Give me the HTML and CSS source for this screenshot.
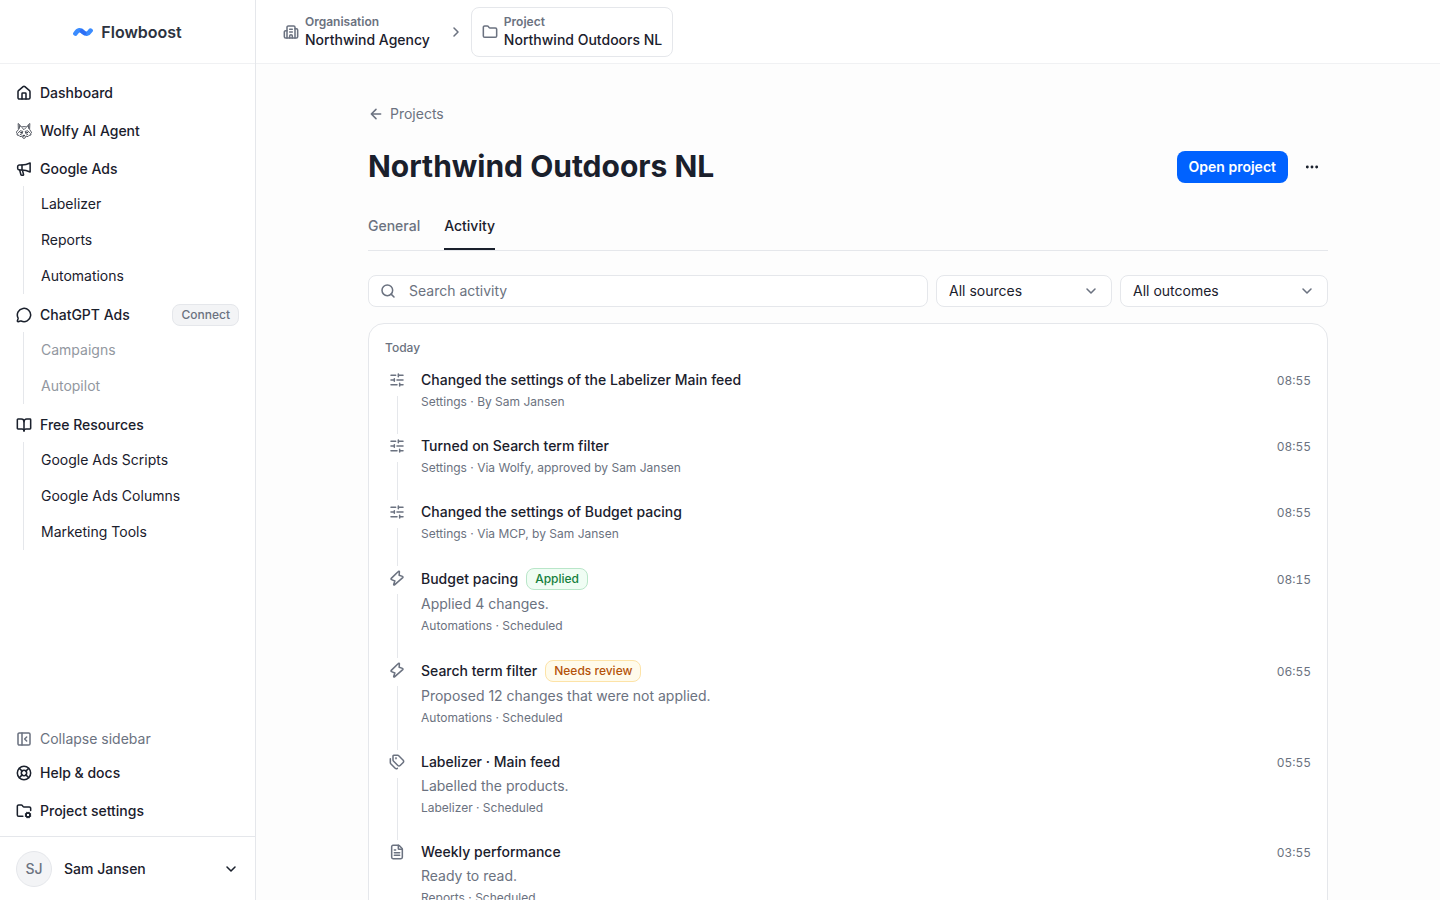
FILE: index.html
```html
<!DOCTYPE html>
<html lang="en">
<head>
<meta charset="utf-8">
<title>Northwind Outdoors NL – Activity</title>
<link rel="stylesheet" href="styles.css">
</head>
<body>
<svg class="sprite" aria-hidden="true">
  <symbol id="i-sliders" viewBox="0 0 24 24"><path d="M10 5H3M12 19H3M14 3v4M16 17v4M21 12h-9M21 19h-5M21 5h-7M8 10v4M8 12H3"/></symbol>
  <symbol id="i-zap" viewBox="0 0 24 24"><path d="M14 2.200 3.400 12.600a1.100 1.100 0 0 0 .4 1.800L8.800 16.400 7 21.600a.8.8 0 0 0 1.300.8L20.600 11.400a1.100 1.100 0 0 0-.4-1.800L15.200 7.800 15.600 2.900a.9.9 0 0 0-1.600-.7z"/></symbol>
  <symbol id="i-down" viewBox="0 0 24 24"><path d="m6 9 6 6 6-6"/></symbol>
</svg>
<div class="app">
  <aside class="sidebar">
    <div class="brand">
      <svg class="brand-mark" viewBox="0 0 20 10" aria-hidden="true">
        <path d="M2.400 6.600C5 2.400 7.600 2.500 10 5S15 7.600 17.600 3.600" fill="none" stroke="#3b8cff" stroke-width="4.600" stroke-linecap="round"/>
        <path d="M8.600 4C9.600 4.900 10.500 5.700 11.600 6.200" fill="none" stroke="#2f6ff5" stroke-width="4" stroke-linecap="round"/>
      </svg>
      <span>Flowboost</span>
    </div>
    <nav class="nav">
      <a class="nav-item" href="#"><svg class="icon" viewBox="0 0 24 24"><path d="M15 21v-8a1 1 0 0 0-1-1h-4a1 1 0 0 0-1 1v8"/><path d="M3 10a2 2 0 0 1 .709-1.528l7-6a2 2 0 0 1 2.582 0l7 6A2 2 0 0 1 21 10v9a2 2 0 0 1-2 2H5a2 2 0 0 1-2-2z"/></svg>Dashboard</a>
      <a class="nav-item" href="#"><svg class="icon wolf" viewBox="0 0 24 24"><path d="M3.600 9.500 3.200.8Q6 2 7.500 6Q12 4.800 16.500 6Q18 2 20.800.8L20.400 9.500L23.500 14.500L22 15.500L22.500 18L19.500 18.500L18 20.500L15 19.500Q14 23.200 12 23.200Q10 23.200 9 19.500L6 20.500L4.500 18.500L1.500 18L2 15.500L.5 14.500z"/><path d="M5.200 4v4M18.800 4v4M9.500 7.500 12 10 14.500 7.500M3.500 14.500Q6 9.500 10.200 12.500Q10.500 17 6.500 17.500M20.500 14.500Q18 9.500 13.800 12.500Q13.500 17 17.500 17.500"/><circle cx="7.500" cy="14.500" r=".6"/><circle cx="16.500" cy="14.500" r=".6"/><path class="solid" d="M10.800 18.500h2.400L12 20z"/></svg>Wolfy AI Agent</a>
      <div class="nav-group">
        <a class="nav-item" href="#"><svg class="icon" viewBox="0 0 24 24"><path d="M9 6H5a2.500 2.500 0 0 0-2.500 2.500v2.500A2.500 2.500 0 0 0 5 13.500h4c4 0 8 1 12.200 3V3C17 5 13 6 9 6z"/><path d="M9 6v7.500"/><path d="M5.500 13.500 7.300 20.300a1.600 1.600 0 0 0 1.500 1.200h1.400a1.100 1.100 0 0 0 1.100-1.400L10 15.500"/></svg>Google Ads</a>
        <div class="sub">
          <a href="#">Labelizer</a><a href="#">Reports</a><a href="#">Automations</a>
        </div>
      </div>
      <div class="nav-group">
        <div class="nav-row">
          <a class="nav-item" href="#"><svg class="icon" viewBox="0 0 24 24"><path d="M2.992 16.342a2 2 0 0 1 .094 1.167l-1.065 3.290a1 1 0 0 0 1.236 1.168l3.413-.998a2 2 0 0 1 1.099.092 10 10 0 1 0-4.777-4.719"/></svg>ChatGPT Ads</a>
          <button class="badge badge-grey" type="button">Connect</button>
        </div>
        <div class="sub sub-off">
          <a href="#">Campaigns</a><a href="#">Autopilot</a>
        </div>
      </div>
      <div class="nav-group">
        <a class="nav-item" href="#"><svg class="icon" viewBox="0 0 24 24"><path d="M12 7v14"/><path d="M3 18a1 1 0 0 1-1-1V4a1 1 0 0 1 1-1h5a4 4 0 0 1 4 4 4 4 0 0 1 4-4h5a1 1 0 0 1 1 1v13a1 1 0 0 1-1 1h-6a3 3 0 0 0-3 3 3 3 0 0 0-3-3z"/></svg>Free Resources</a>
        <div class="sub">
          <a href="#">Google Ads Scripts</a><a href="#">Google Ads Columns</a><a href="#">Marketing Tools</a>
        </div>
      </div>
    </nav>
    <div class="nav-foot">
      <button class="nav-item collapse" type="button"><svg class="icon" viewBox="0 0 24 24"><rect x="3" y="3" width="18" height="18" rx="2"/><path d="M9 3v18M16 15l-3-3 3-3"/></svg>Collapse sidebar</button>
      <a class="nav-item" href="#"><svg class="icon" viewBox="0 0 24 24"><circle cx="12" cy="12" r="10"/><path d="m4.930 4.930 4.240 4.240M14.830 9.170l4.240-4.240M14.830 14.830l4.240 4.240M9.170 14.830l-4.240 4.240"/><circle cx="12" cy="12" r="4"/></svg>Help &amp; docs</a>
      <a class="nav-item settings" href="#"><svg class="icon" viewBox="0 0 24 24"><circle cx="18" cy="18" r="3"/><path d="M10.300 20H4a2 2 0 0 1-2-2V5a2 2 0 0 1 2-2h3.900a2 2 0 0 1 1.690.9l.81 1.200a2 2 0 0 0 1.670.9H20a2 2 0 0 1 2 2v3.300"/><path d="m21.700 19.400-.9-.3M15.200 16.900l-.9-.3M16.600 21.700l.3-.9M19.100 15.200l.3-.9M19.600 21.700l-.4-1M16.800 15.300l-.4-1M14.300 19.600l1-.4M20.700 16.800l1-.4"/></svg>Project settings</a>
    </div>
    <button class="user" type="button">
      <span class="avatar">SJ</span>
      <span class="user-name">Sam Jansen</span>
      <svg class="icon"><use href="#i-down"/></svg>
    </button>
  </aside>

  <div class="page">
    <header class="topbar">
      <button class="crumb" type="button">
        <svg class="icon" viewBox="0 0 24 24"><path d="M10 12h4M10 8h4M14 21v-3a2 2 0 0 0-4 0v3"/><path d="M6 10H4a2 2 0 0 0-2 2v7a2 2 0 0 0 2 2h16a2 2 0 0 0 2-2V9a2 2 0 0 0-2-2h-2"/><path d="M6 21V5a2 2 0 0 1 2-2h8a2 2 0 0 1 2 2v16"/></svg>
        <span class="crumb-text"><span class="crumb-label">Organisation</span><span>Northwind Agency</span></span>
      </button>
      <svg class="icon muted" viewBox="0 0 24 24"><path d="m9 18 6-6-6-6"/></svg>
      <button class="crumb crumb-current" type="button">
        <svg class="icon" viewBox="0 0 24 24"><path d="M20 20a2 2 0 0 0 2-2V8a2 2 0 0 0-2-2h-7.900a2 2 0 0 1-1.690-.9L9.600 3.900A2 2 0 0 0 7.930 3H4a2 2 0 0 0-2 2v13a2 2 0 0 0 2 2Z"/></svg>
        <span class="crumb-text"><span class="crumb-label">Project</span><span>Northwind Outdoors NL</span></span>
      </button>
    </header>

    <main class="main">
      <div class="content">
        <a class="back" href="#"><svg class="icon" viewBox="0 0 24 24"><path d="m12 19-7-7 7-7M19 12H5"/></svg>Projects</a>
        <div class="title-row">
          <h1>Northwind Outdoors NL</h1>
          <div class="actions">
            <button class="primary" type="button">Open project</button>
            <button class="more" type="button" aria-label="More actions"><svg class="icon dots" viewBox="0 0 24 24"><circle cx="12" cy="12" r="1"/><circle cx="19" cy="12" r="1"/><circle cx="5" cy="12" r="1"/></svg></button>
          </div>
        </div>
        <nav class="tabs">
          <a href="#">General</a>
          <a class="active" href="#" aria-current="page">Activity</a>
        </nav>
        <div class="filters">
          <div class="field search">
            <svg class="icon muted" viewBox="0 0 24 24"><circle cx="11" cy="11" r="8"/><path d="m21 21-4.340-4.340"/></svg>
            <input type="search" placeholder="Search activity" aria-label="Search activity">
          </div>
          <div class="field sources">
            <select aria-label="Source"><option>All sources</option></select>
            <svg class="icon muted field-arrow"><use href="#i-down"/></svg>
          </div>
          <div class="field outcomes">
            <select aria-label="Outcome"><option>All outcomes</option></select>
            <svg class="icon muted field-arrow"><use href="#i-down"/></svg>
          </div>
        </div>

        <section class="card">
          <h2>Today</h2>
          <ol class="timeline">
            <li class="event">
              <div class="rail"><span class="rail-icon"><svg class="icon"><use href="#i-sliders"/></svg></span></div>
              <div class="body"><div class="head"><h3>Changed the settings of the Labelizer Main feed</h3></div><p class="meta">Settings · By Sam Jansen</p></div>
              <time>08:55</time>
            </li>
            <li class="event">
              <div class="rail"><span class="rail-icon"><svg class="icon"><use href="#i-sliders"/></svg></span></div>
              <div class="body"><div class="head"><h3>Turned on Search term filter</h3></div><p class="meta">Settings · Via Wolfy, approved by Sam Jansen</p></div>
              <time>08:55</time>
            </li>
            <li class="event">
              <div class="rail"><span class="rail-icon"><svg class="icon"><use href="#i-sliders"/></svg></span></div>
              <div class="body"><div class="head"><h3>Changed the settings of Budget pacing</h3></div><p class="meta">Settings · Via MCP, by Sam Jansen</p></div>
              <time>08:55</time>
            </li>
            <li class="event">
              <div class="rail"><span class="rail-icon"><svg class="icon"><use href="#i-zap"/></svg></span></div>
              <div class="body"><div class="head"><h3>Budget pacing</h3><span class="badge badge-green">Applied</span></div><p>Applied 4 changes.</p><p class="meta">Automations · Scheduled</p></div>
              <time class="tall">08:15</time>
            </li>
            <li class="event">
              <div class="rail"><span class="rail-icon"><svg class="icon"><use href="#i-zap"/></svg></span></div>
              <div class="body"><div class="head"><h3>Search term filter</h3><span class="badge badge-amber">Needs review</span></div><p>Proposed 12 changes that were not applied.</p><p class="meta">Automations · Scheduled</p></div>
              <time class="tall">06:55</time>
            </li>
            <li class="event">
              <div class="rail"><span class="rail-icon"><svg class="icon" viewBox="0 0 24 24"><path d="M13.172 2a2 2 0 0 1 1.414.586l6.710 6.710a2.400 2.400 0 0 1 0 3.408l-4.592 4.592a2.400 2.400 0 0 1-3.408 0l-6.710-6.710A2 2 0 0 1 6 9.172V3a1 1 0 0 1 1-1z"/><path d="M2 7v6.172a2 2 0 0 0 .586 1.414l6.710 6.710a2.400 2.400 0 0 0 3.191.193"/><circle cx="10.500" cy="6.500" r=".5"/></svg></span></div>
              <div class="body"><div class="head"><h3>Labelizer · Main feed</h3></div><p>Labelled the products.</p><p class="meta">Labelizer · Scheduled</p></div>
              <time>05:55</time>
            </li>
            <li class="event">
              <div class="rail"><span class="rail-icon"><svg class="icon" viewBox="0 0 24 24"><path d="M6 22a2 2 0 0 1-2-2V4a2 2 0 0 1 2-2h8a2.400 2.400 0 0 1 1.704.706l3.588 3.588A2.400 2.400 0 0 1 20 8v12a2 2 0 0 1-2 2z"/><path d="M14 2v5a1 1 0 0 0 1 1h5M10 9H8M16 13H8M16 17H8"/></svg></span></div>
              <div class="body"><div class="head"><h3>Weekly performance</h3></div><p>Ready to read.</p><p class="meta">Reports · Scheduled</p></div>
              <time>03:55</time>
            </li>
          </ol>
        </section>
      </div>
    </main>
  </div>
</div>
</body>
</html>
```
FILE: styles.css
```css
:root {
  --ink: #1a202c;
  --muted: #6b7280;
  --line: #e5e7eb;
}
*, *::before, *::after { box-sizing: border-box; }
body {
  margin: 0;
  font: 400 14px/20px Inter, "Liberation Sans", sans-serif;
  color: var(--ink);
  background: #fff;
}
a { color: inherit; text-decoration: none; }
button, input, select { font: inherit; color: inherit; }
button { padding: 0; border: 0; background: none; text-align: left; cursor: pointer; }
h1, h2, h3, p, ol { margin: 0; padding: 0; }
.sprite { display: none; }
.icon {
  width: 16px;
  height: 16px;
  flex: none;
  fill: none;
  stroke: currentColor;
  stroke-width: 2.3;
  stroke-linecap: round;
  stroke-linejoin: round;
}
.muted { color: var(--muted); }

.app { display: flex; height: 100vh; }

.sidebar {
  display: flex;
  flex-direction: column;
  width: 256px;
  flex: none;
  border-right: 1px solid var(--line);
}
.brand {
  display: flex;
  align-items: center;
  justify-content: center;
  gap: 8px;
  height: 64px;
  flex: none;
  border-bottom: 1px solid #f0f1f3;
  font-size: 16px;
  font-weight: 600;
  line-height: 24px;
  color: #2d3340;
}
.brand-mark { width: 20px; height: 10px; }
.nav {
  display: flex;
  flex-direction: column;
  gap: 4px;
  flex: 1;
  padding: 12px 16px;
}
.nav-item {
  display: flex;
  align-items: center;
  gap: 8px;
  height: 34px;
  font-weight: 500;
}
.nav-row { display: flex; align-items: center; justify-content: space-between; }
.wolf { stroke-width: 1.1; }
.solid { fill: currentColor; }
.sub {
  display: flex;
  flex-direction: column;
  margin-left: 7px;
  padding-left: 17px;
  border-left: 1px solid var(--line);
}
.sub a { padding: 8px 0; }
.sub-off { color: #9297a0; }
.nav-foot { display: flex; flex-direction: column; padding: 0 16px 8px; }
.collapse { font-weight: 400; color: var(--muted); }
.settings { margin-top: 4px; }
.user {
  display: flex;
  align-items: center;
  gap: 12px;
  height: 64px;
  flex: none;
  padding: 0 16px;
  border-top: 1px solid var(--line);
  font-weight: 500;
}
.avatar {
  display: grid;
  place-items: center;
  width: 36px;
  height: 36px;
  border: 1px solid var(--line);
  border-radius: 50%;
  background: #f3f4f6;
  color: var(--muted);
}
.user-name { flex: 1; }

.badge {
  padding: 2px 8px;
  border: 1px solid;
  border-radius: 8px;
  font-size: 12px;
  font-weight: 500;
  line-height: 16px;
}
.badge-grey { background: #f3f4f6; border-color: var(--line); color: var(--muted); }
.badge-green { background: #f0fdf4; border-color: #b9e6c9; color: #15803d; }
.badge-amber { background: #fffbeb; border-color: #fde3a7; color: #b45309; }

.page { display: flex; flex-direction: column; flex: 1; min-width: 0; }
.topbar {
  display: flex;
  align-items: center;
  gap: 7px;
  height: 64px;
  flex: none;
  padding: 0 16px;
  border-bottom: 1px solid #f0f1f3;
}
.crumb {
  display: flex;
  align-items: center;
  gap: 6px;
  padding: 6px 10px;
  border: 1px solid transparent;
  border-radius: 8px;
  font-weight: 500;
}
.crumb .icon { color: var(--muted); }
.crumb-current { border-color: var(--line); }
.crumb-text { display: flex; flex-direction: column; }
.crumb-label { font-size: 12px; font-weight: 600; line-height: 16px; color: var(--muted); }

.main {
  flex: 1;
  overflow-y: auto;
  scrollbar-width: none;
  padding: 40px 32px;
  background: #fdfdfd;
}
.content { display: flex; flex-direction: column; max-width: 960px; margin: 0 auto; }
.back { display: flex; align-items: center; gap: 6px; align-self: flex-start; color: var(--muted); }
.title-row {
  display: flex;
  align-items: center;
  justify-content: space-between;
  margin-top: 24px;
}
h1 { padding-bottom: 2px; font-size: 30px; font-weight: 700; line-height: 36px; }
.actions { display: flex; gap: 8px; }
.primary {
  height: 32px;
  padding: 0 12px;
  border-radius: 8px;
  background: #0062ff;
  color: #fff;
  font-weight: 600;
}
.more { display: grid; place-items: center; width: 32px; height: 32px; }
.dots { fill: currentColor; }
.tabs {
  display: flex;
  gap: 24px;
  margin-top: 30px;
  border-bottom: 1px solid var(--line);
  font-weight: 500;
  color: var(--muted);
}
.tabs a { padding-bottom: 12px; border-bottom: 2px solid transparent; }
.tabs .active { color: var(--ink); border-color: var(--ink); }

.filters { display: flex; gap: 8px; margin: 24px 0 16px; }
.field {
  position: relative;
  display: flex;
  align-items: center;
  height: 32px;
  border: 1px solid var(--line);
  border-radius: 8px;
  background: #fff;
}
.search { flex: 1; gap: 13px; padding: 0 12px 0 11px; }
.search input { flex: 1; min-width: 0; padding: 0; border: 0; outline: 0; background: none; appearance: none; }
.search input::placeholder { color: var(--muted); opacity: 1; }
.field select {
  width: 100%;
  height: 100%;
  padding: 0 36px 0 12px;
  border: 0;
  background: none;
  appearance: none;
}
.field-arrow { position: absolute; right: 12px; pointer-events: none; }
.sources { width: 176px; }
.outcomes { width: 208px; }

.card {
  padding: 16px;
  border: 1px solid var(--line);
  border-radius: 16px;
  background: #fff;
}
h2 { font-size: 12px; font-weight: 500; line-height: 16px; color: var(--muted); }
.timeline { list-style: none; margin-top: 12px; }
.event { display: flex; gap: 12px; }
.rail {
  display: flex;
  flex-direction: column;
  align-items: center;
  gap: 4px;
  width: 24px;
  color: var(--muted);
}
.rail-icon { display: grid; place-items: center; width: 24px; height: 24px; }
.rail::after { content: ""; flex: 1; width: 1px; margin-left: 1px; background: var(--line); }
.event:last-child .rail::after { display: none; }
.body {
  display: flex;
  flex-direction: column;
  gap: 4px;
  flex: 1;
  min-width: 0;
  padding: 2px 0 24px;
  color: var(--muted);
}
.head { display: flex; align-items: center; gap: 8px; color: var(--ink); }
h3 { font-size: 14px; font-weight: 500; line-height: 20px; }
.meta, time { font-size: 12px; line-height: 16px; }
time { padding-top: 5px; color: var(--muted); font-variant-numeric: tabular-nums; }
.tall { padding-top: 6px; }
```
